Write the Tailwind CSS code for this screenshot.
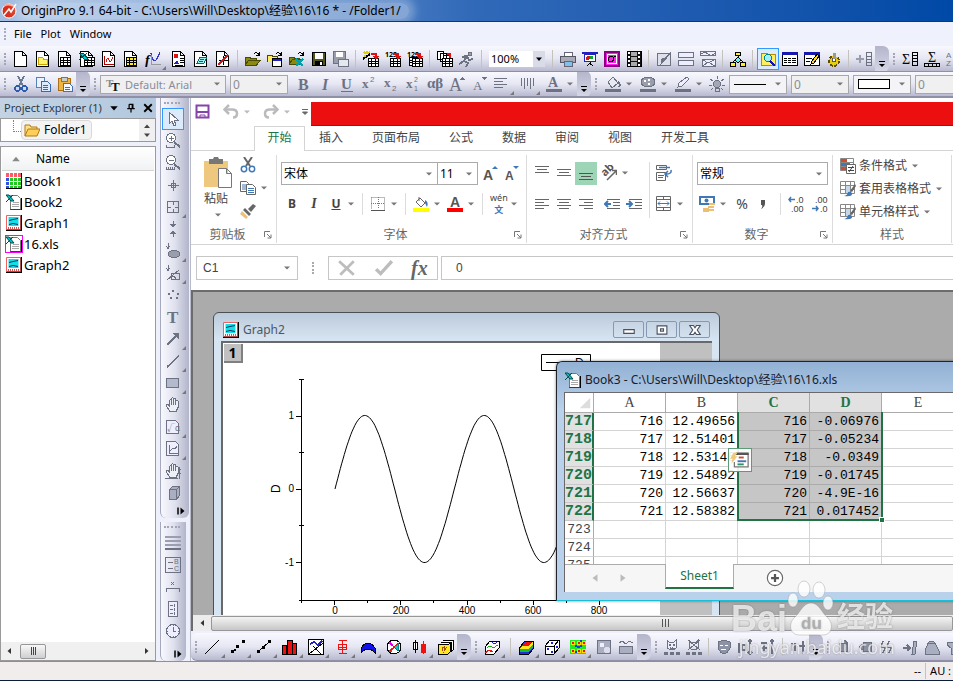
<!DOCTYPE html>
<html lang="zh-CN">
<head>
    <meta charset="UTF-8">
    <meta name="viewport" content="width=device-width, initial-scale=1.0">
    <title>OriginPro 9.1 64-bit</title>
    <script src="https://cdn.jsdelivr.net/npm/@tailwindcss/browser@4"></script>
</head>
<body class="flex h-screen flex-col overflow-hidden bg-[#eef0fb] font-['Noto_Sans','Noto_Sans_CJK_SC',sans-serif] text-xs text-black">

    <!-- Title bar -->
    <header class="flex h-[22px] shrink-0 items-center gap-1 overflow-hidden border-b border-[#1b3561] bg-linear-to-r from-[#a3bfe2] via-[#3069b8] to-[#0049a6] pl-px">
        <svg class="size-4 shrink-0" data-icon="origin"></svg>
        <h1 class="rounded-full bg-white/35 pr-2 text-xs whitespace-nowrap shadow-[0_0_8px_6px_rgba(255,255,255,0.3)]">OriginPro 9.1 64-bit - C:\Users\Will\Desktop\经验\16\16 * - /Folder1/</h1>
    </header>

    <!-- Menu -->
    <nav class="flex h-6 shrink-0 items-center bg-[#eff1fc] pl-1 text-[11px]">
        <span class="h-3 border-l-2 border-dotted border-[#a9abb9]"></span>
        <a href="#" class="ml-2">File</a>
        <a href="#" class="ml-[9px]">Plot</a>
        <a href="#" class="ml-[9px]">Window</a>
    </nav>

    <!-- Standard toolbar -->
    <div class="flex h-[26px] shrink-0 items-center overflow-hidden border-b border-[#8f90a6] bg-linear-to-b from-[#f8f8fe] via-[#e6e7f3] to-[#b9bad0] pt-px">
        <div class="flex items-center" data-tools="grip new folder sheet excel graph matrix fx* layout notes func | open openTpl openXls save saveTpl | wizard imp1 imp2 | batch run |"></div>
        <label class="relative mr-1 ml-[3px] flex h-4 w-14 shrink-0 bg-white">
            <select class="w-full appearance-none px-0.5 text-[11px] leading-4" aria-label="Zoom"><option>100%</option></select>
            <span class="pointer-events-none absolute inset-y-0 right-0 flex w-3 items-center justify-center bg-[#d9dbe9]"><svg class="size-2" data-icon="down"></svg></span>
        </label>
        <div class="flex items-center" data-tools="| print slides video film | brush split vsplit | tree | explorer! results command gear | addcol over grip sum sigma sort"></div>
    </div>

    <!-- Format toolbar -->
    <div class="flex h-[26px] shrink-0 items-center overflow-hidden border-b-2 border-[#8f90a6] bg-linear-to-b from-[#f8f8fe] via-[#e6e7f3] to-[#b9bad0] text-[#8a8c96]">
        <div class="flex items-center" data-tools="grip cut copy paste over grip"></div>
        <label class="relative flex h-[19px] w-[126px] shrink-0 items-center gap-1 border border-[#a8a8a8] bg-[#f0f0f3] pl-1">
            <svg class="size-4 shrink-0" data-icon="tt"></svg>
            <select class="w-24 appearance-none text-[11px] leading-[17px]" aria-label="Font"><option>Default: Arial</option></select>
            <svg class="pointer-events-none absolute right-1 size-2" data-icon="downGray"></svg>
        </label>
        <label class="relative ml-1 flex h-[19px] w-[58px] shrink-0 items-center border border-[#a8a8a8] bg-[#f0f0f0]">
            <select class="w-full appearance-none pl-0.5 text-xs leading-[17px]" aria-label="Font size"><option>0</option></select>
            <svg class="pointer-events-none absolute right-1 size-2" data-icon="downGray"></svg>
        </label>
        <div class="ml-1 flex items-center" data-tools="bold italic under sup sub supsub greek bigA smallA alignL* vlines* fontA+ over grip bucket+ palette+ pen+ bulb"></div>
        <label class="relative ml-px flex h-[19px] w-[58px] shrink-0 items-center border border-[#a8a8a8] bg-[#f4f4f8] px-1">
            <span class="w-8 border-b border-black"></span>
            <select class="absolute inset-0 appearance-none opacity-0" aria-label="Line style"><option>Solid</option></select>
            <svg class="pointer-events-none absolute right-1 size-2" data-icon="downGray"></svg>
        </label>
        <label class="relative ml-1 flex h-[19px] w-[58px] shrink-0 items-center border border-[#a8a8a8] bg-[#f0f0f0]">
            <select class="w-full appearance-none pl-0.5 text-xs leading-[17px]" aria-label="Line width"><option>0</option></select>
            <svg class="pointer-events-none absolute right-1 size-2" data-icon="downGray"></svg>
        </label>
        <label class="relative ml-1 flex h-[19px] w-[58px] shrink-0 items-center border border-[#a8a8a8] bg-[#f4f4f8] px-1">
            <span class="h-[10px] w-8 border border-black bg-white"></span>
            <select class="absolute inset-0 appearance-none opacity-0" aria-label="Fill pattern"><option>None</option></select>
            <svg class="pointer-events-none absolute right-1 size-2" data-icon="downGray"></svg>
        </label>
        <label class="relative ml-1 flex h-[19px] w-[58px] shrink-0 items-center border border-[#a8a8a8] bg-[#f0f0f0]">
            <select class="w-full appearance-none pl-0.5 text-xs leading-[17px]" aria-label="Pattern width"><option>0</option></select>
        </label>
    </div>

    <div class="flex min-h-0 flex-1">
        <!-- Project explorer -->
        <aside class="flex w-[156px] shrink-0 flex-col">
            <div class="flex h-5 shrink-0 items-center bg-linear-to-r from-[#c3d3e3] to-[#b3c8de] pl-1 text-[11px] text-[#2c3a4c]">
                <h2 class="flex-1 text-[11px] whitespace-nowrap">Project Explorer (1)</h2>
                <button class="flex w-4 justify-center" aria-label="Menu"><svg class="size-2.5" data-icon="down"></svg></button>
                <button class="flex w-[18px] justify-center" aria-label="Pin"><svg class="size-2.5" data-icon="pin"></svg></button>
                <button class="flex w-4 justify-center" aria-label="Close"><svg class="size-2.5" data-icon="x"></svg></button>
            </div>
            <div class="flex h-6 shrink-0 items-center border border-[#9a9a9a] bg-white">
                <span class="mb-2 ml-3 h-3 w-2 border-b border-l border-dotted border-[#808080]"></span>
                <a href="#" class="flex h-5 items-center gap-1 rounded-sm border border-[#d9d9d9] bg-[#f3f3f3] px-0.5 pr-1 text-xs"><svg class="size-4" data-icon="treeFolder"></svg>Folder1</a>
                <span class="ml-auto flex h-full w-4 flex-col items-center justify-around bg-[#f0f0f0] py-0.5"><svg class="size-2" data-icon="up"></svg><svg class="size-2" data-icon="downDark"></svg></span>
            </div>
            <div class="mt-1 flex min-h-0 flex-1 flex-col border border-[#9a9a9a] bg-white">
                <div class="mx-px flex h-6 shrink-0 items-center border-b border-[#d5d5d5] bg-linear-to-b from-white to-[#f1f2f4] pl-2 text-xs"><svg class="mr-3.5 size-3" data-icon="upGray"></svg>Name</div>
                <ul class="flex-1 pl-[5px] text-[13px] leading-[21px]">
                    <li><a href="#" class="flex h-[21px] items-center gap-0.5"><svg class="mb-px size-4" data-icon="book1"></svg>Book1</a></li>
                    <li><a href="#" class="flex h-[21px] items-center gap-0.5"><svg class="mb-px size-4" data-icon="xls"></svg>Book2</a></li>
                    <li><a href="#" class="flex h-[21px] items-center gap-0.5"><svg class="mb-px size-4" data-icon="graphFile"></svg>Graph1</a></li>
                    <li><a href="#" class="flex h-[21px] items-center gap-0.5"><svg class="mb-px size-4 outline outline-[#f0f]" data-icon="xls"></svg>16.xls</a></li>
                    <li><a href="#" class="flex h-[21px] items-center gap-0.5"><svg class="mb-px size-4" data-icon="graphFile"></svg>Graph2</a></li>
                </ul>
                <div class="flex h-[18px] shrink-0 items-center bg-[#f0f0f0] px-1">
                    <svg class="size-2" data-icon="left"></svg>
                    <span class="ml-[7px] flex h-[15px] w-[26px] items-center justify-center gap-px rounded-xs border border-[#979797] bg-linear-to-b from-[#f8f8f8] to-[#cfcfd2]"><i class="h-2 w-px bg-[#444]"></i><i class="h-2 w-px bg-[#444]"></i><i class="h-2 w-px bg-[#444]"></i></span>
                    <svg class="ml-auto size-2" data-icon="right"></svg>
                </div>
            </div>
        </aside>

        <!-- Tool palette -->
        <aside class="flex w-[34px] shrink-0 flex-col overflow-hidden pl-1">
            <div class="flex w-[29px] flex-col items-start rounded-b-md border-l border-[#a6a8bd] bg-linear-to-r from-[#f8f8fe] via-[#dfe1ee] to-[#b2b4ca] pl-px" data-palette="pointer! zoomIn zoomOut cross screen* reader mask* region* dots text arrow* line* rect* hand formula* minigraph* handaxis cube"></div>
            <div class="mt-1 flex w-[26px] flex-1 flex-col items-start rounded-b-md border-l border-[#a6a8bd] bg-linear-to-r from-[#f8f8fe] via-[#dfe1ee] to-[#b2b4ca] pl-px" data-palette="bars legend scale colorbar clock"></div>
        </aside>

        <main class="flex min-w-0 flex-1 flex-col border-l border-[#b9bbc9]">
            <!-- Quick access -->
            <div class="flex h-7 shrink-0 items-center bg-white text-[#444]">
                <button class="ml-1 flex w-4 justify-center" aria-label="保存"><svg class="size-4" data-icon="xlSave"></svg></button>
                <button class="ml-3 flex items-center gap-1" aria-label="撤消"><svg class="size-4" data-icon="undo"></svg><svg class="size-2 opacity-50" data-icon="downGray"></svg></button>
                <button class="ml-3 flex items-center gap-1" aria-label="恢复"><svg class="size-4" data-icon="redo"></svg><svg class="size-2 opacity-50" data-icon="downGray"></svg></button>
                <button class="ml-2.5 w-2" aria-label="自定义"><svg class="size-2" data-icon="more"></svg></button>
                <div class="mt-1 ml-0.5 h-6 flex-1 border-b border-[#c00] bg-[#eb0f0f]"></div>
            </div>

            <!-- Ribbon tabs -->
            <nav class="flex h-[25px] shrink-0 items-stretch bg-white text-xs leading-6 text-[#444]">
                <span class="w-[63px] border-b border-[#d4d4d4]"></span>
                <a href="#" class="w-[51px] border border-b-0 border-[#d4d4d4] text-center leading-[22px] text-[#217346]">开始</a>
                <div class="flex flex-1 gap-[29px] border-b border-[#d4d4d4] pl-[14px] whitespace-nowrap">
                    <a href="#">插入</a><a href="#">页面布局</a><a href="#">公式</a><a href="#">数据</a><a href="#">审阅</a><a href="#">视图</a><a href="#">开发工具</a>
                </div>
            </nav>

            <!-- Ribbon -->
            <div class="flex h-[94px] shrink-0 overflow-hidden border-b border-[#d4d4d4] bg-white pt-1 pb-px text-xs text-[#444]">
                <section class="flex w-[86px] shrink-0 flex-col border-r border-[#dcdcdc]">
                    <div class="flex flex-1 gap-2 pt-0.5 pl-[13px]">
                        <button class="flex w-7 flex-col items-start text-xs leading-4"><svg class="h-8 w-7" viewBox="0 0 28 32"><path d="M0 4h24v26H0z" fill="#edc87e"/><path d="M5 7V2h4l1-2h4l1 2h4v5z" fill="#777"/><path d="M14.500 11.500h8l5 5v14h-13z M22.500 11.500v5h5" fill="#fff" stroke="#777"/></svg><span class="mt-0.5">粘贴</span><svg class="mt-1 ml-2.5 size-2" data-icon="downGray"></svg></button>
                        <div class="flex flex-col gap-[7px]">
                            <button class="w-4" aria-label="剪切"><svg class="size-4" data-icon="xlCut"></svg></button>
                            <button class="flex items-center gap-1" aria-label="复制"><svg class="size-4" data-icon="xlCopy"></svg><svg class="size-2" data-icon="downGray"></svg></button>
                            <button class="w-4" aria-label="格式刷"><svg class="size-4" data-icon="xlBrush"></svg></button>
                        </div>
                    </div>
                    <div class="flex h-4 items-center text-[#666]"><h3 class="flex-1 text-center">剪贴板</h3><svg class="mr-1 size-2" data-icon="launch"></svg></div>
                </section>

                <section class="flex w-[250px] shrink-0 flex-col border-r border-[#dcdcdc]">
                    <div class="flex flex-1 flex-col gap-2 px-1 pt-[7px]">
                        <div class="flex h-[23px] items-center">
                            <label class="relative flex h-[23px] w-[157px] shrink-0 items-center border border-[#ababab] text-black"><select class="w-full appearance-none pl-0.5" aria-label="字体"><option>宋体</option></select><svg class="pointer-events-none absolute right-1 size-2" data-icon="downGray"></svg></label>
                            <label class="relative -ml-px flex h-[23px] w-[41px] shrink-0 items-center border border-[#ababab] text-black"><select class="w-full appearance-none pl-0.5" aria-label="字号"><option>11</option></select><svg class="pointer-events-none absolute right-1 size-2" data-icon="downGray"></svg></label>
                            <button class="ml-px flex h-[23px] w-[22px] items-center justify-center pb-px" aria-label="增大字号"><svg class="size-4" data-icon="growA"></svg></button>
                            <button class="flex h-[23px] w-[22px] items-center justify-center pb-px" aria-label="减小字号"><svg class="size-4" data-icon="shrinkA"></svg></button>
                        </div>
                        <div class="flex h-[22px] items-center">
                            <button class="w-[22px] shrink-0 text-xs font-bold">B</button>
                            <button class="w-[22px] shrink-0 font-['Liberation_Serif',serif] text-sm font-bold italic">I</button>
                            <button class="w-[22px] shrink-0 text-xs font-bold underline">U</button>
                            <svg class="size-2 shrink-0" data-icon="downGray"></svg>
                            <span class="mx-[7px] h-full border-l border-[#dcdcdc]"></span>
                            <button class="flex items-center gap-1" aria-label="边框"><svg class="size-4" data-icon="xlBorder"></svg><svg class="size-2" data-icon="downGray"></svg></button>
                            <span class="mx-[7px] h-full border-l border-[#dcdcdc]"></span>
                            <button class="flex items-center gap-1" aria-label="填充颜色"><svg class="size-4" data-icon="xlFill"></svg><svg class="size-2" data-icon="downGray"></svg></button>
                            <button class="ml-1.5 flex items-center gap-1" aria-label="字体颜色"><svg class="size-4" data-icon="xlFontA"></svg><svg class="size-2" data-icon="downGray"></svg></button>
                            <span class="mx-[7px] h-full border-l border-[#dcdcdc]"></span>
                            <button class="flex items-center gap-0.5" aria-label="拼音"><span class="flex flex-col items-center text-[9px] leading-3"><span>wén</span><span class="font-bold text-[#3b76b8]">文</span></span><svg class="size-2" data-icon="downGray"></svg></button>
                        </div>
                    </div>
                    <div class="flex h-4 items-center text-[#666]"><h3 class="flex-1 text-center">字体</h3><svg class="mr-1 size-2" data-icon="launch"></svg></div>
                </section>

                <section class="flex w-[166px] shrink-0 flex-col border-r border-[#dcdcdc]">
                    <div class="flex flex-1 gap-1 pt-[7px] pl-1">
                        <div class="flex flex-col gap-2">
                            <div class="flex h-[23px] items-center">
                                <button class="flex h-[23px] w-[22px] items-center justify-center pb-px" aria-label="顶端对齐"><svg class="size-4" data-icon="vTop"></svg></button>
                                <button class="flex h-[23px] w-[22px] items-center justify-center pb-px" aria-label="垂直居中"><svg class="size-4" data-icon="vMid"></svg></button>
                                <button class="flex h-[23px] w-[22px] items-center justify-center bg-[#9fd5b7] pb-px" aria-label="底端对齐"><svg class="size-4" data-icon="vBot"></svg></button>
                                <button class="ml-1 flex h-[23px] items-center gap-1 pb-px" aria-label="方向"><svg class="size-4" data-icon="orient"></svg><svg class="size-2" data-icon="downGray"></svg></button>
                            </div>
                            <div class="flex h-[22px] items-center">
                                <button class="flex w-[22px] justify-center" aria-label="左对齐"><svg class="size-4" data-icon="hLeft"></svg></button>
                                <button class="flex w-[22px] justify-center" aria-label="居中"><svg class="size-4" data-icon="hMid"></svg></button>
                                <button class="flex w-[22px] justify-center" aria-label="右对齐"><svg class="size-4" data-icon="hRight"></svg></button>
                                <button class="ml-1 flex w-[22px] justify-center" aria-label="减少缩进"><svg class="size-4" data-icon="outdent"></svg></button>
                                <button class="flex w-[22px] justify-center" aria-label="增加缩进"><svg class="size-4" data-icon="indent"></svg></button>
                            </div>
                        </div>
                        <span class="h-14 border-l border-[#dcdcdc]"></span>
                        <div class="ml-0.5 flex flex-col gap-2">
                            <button class="flex h-[23px] items-center pb-px" aria-label="自动换行"><svg class="size-4" data-icon="wrap"></svg></button>
                            <button class="flex h-[22px] items-center gap-1" aria-label="合并后居中"><svg class="size-4" data-icon="merge"></svg><svg class="size-2" data-icon="downGray"></svg></button>
                        </div>
                    </div>
                    <div class="flex h-4 items-center text-[#666]"><h3 class="flex-1 text-center">对齐方式</h3><svg class="mr-1 size-2" data-icon="launch"></svg></div>
                </section>

                <section class="flex w-[140px] shrink-0 flex-col border-r border-[#dcdcdc]">
                    <div class="flex flex-1 flex-col gap-2 px-1 pt-[7px]">
                        <label class="relative flex h-[23px] w-[131px] items-center border border-[#ababab] text-black"><select class="w-full appearance-none pl-0.5" aria-label="数字格式"><option>常规</option></select><svg class="pointer-events-none absolute right-1 size-2" data-icon="downGray"></svg></label>
                        <div class="flex h-[22px] items-center">
                            <button class="ml-0.5 flex items-center gap-1" aria-label="会计数字格式"><svg class="size-4" data-icon="money"></svg><svg class="size-2" data-icon="downGray"></svg></button>
                            <button class="ml-1 w-[22px] text-sm">%</button>
                            <button class="flex w-5 justify-center" aria-label="千位分隔"><svg class="size-4" data-icon="comma"></svg></button>
                            <span class="mx-[7px] h-full border-l border-[#dcdcdc]"></span>
                            <button class="w-4" aria-label="增加小数位数"><svg class="size-4 overflow-visible" data-icon="decInc"></svg></button>
                            <button class="ml-2 w-4" aria-label="减少小数位数"><svg class="size-4 overflow-visible" data-icon="decDec"></svg></button>
                        </div>
                    </div>
                    <div class="flex h-4 items-center text-[#666]"><h3 class="flex-1 text-center">数字</h3><svg class="mr-1 size-2" data-icon="launch"></svg></div>
                </section>

                <section class="flex w-[119px] shrink-0 flex-col border-r border-[#dcdcdc]">
                    <div class="flex flex-1 flex-col pl-[7px] whitespace-nowrap">
                        <button class="flex h-[23px] items-center gap-[3px] pb-px"><svg class="size-4" data-icon="cond"></svg>条件格式<svg class="ml-px size-2" data-icon="downGray"></svg></button>
                        <button class="flex h-[23px] items-center gap-[3px] pb-px"><svg class="size-4" data-icon="tblStyle"></svg>套用表格格式<svg class="ml-px size-2" data-icon="downGray"></svg></button>
                        <button class="flex h-[23px] items-center gap-[3px] pb-px"><svg class="size-4" data-icon="tblStyle"></svg>单元格样式<svg class="ml-px size-2" data-icon="downGray"></svg></button>
                    </div>
                    <h3 class="h-4 text-center leading-4 text-[#666]">样式</h3>
                </section>
            </div>

            <!-- Formula bar -->
            <div class="flex h-[45px] shrink-0 items-center bg-white pl-[5px] font-['Liberation_Sans','Noto_Sans_CJK_SC',sans-serif] text-xs text-[#444]">
                <label class="relative flex h-6 w-[102px] items-center border border-[#c6c6c6]"><input class="w-full px-1.5" value="C1" aria-label="名称框"><svg class="absolute right-1.5 size-2" data-icon="downGray"></svg></label>
                <span class="mx-[14px] h-3 border-l-2 border-dotted border-[#aaa]"></span>
                <div class="flex h-6 w-[110px] items-center justify-around border border-[#c6c6c6]">
                    <button aria-label="取消"><svg class="size-[18px]" data-icon="fxX"></svg></button>
                    <button aria-label="输入"><svg class="size-[18px]" data-icon="fxOk"></svg></button>
                    <button class="font-['Liberation_Serif',serif] text-xl leading-5 font-bold text-[#666] italic">fx</button>
                </div>
                <input class="ml-[3px] h-6 min-w-0 flex-1 border border-r-0 border-[#c6c6c6] px-3.5 text-xs" value="0" aria-label="编辑栏">
            </div>

            <!-- Desktop -->
            <div class="relative min-h-0 flex-1 overflow-hidden border-t-2 border-l-2 border-[#6c6c6c] bg-[#ababab]">
                <section class="absolute top-[20px] left-[20px] flex h-[340px] w-[507px] flex-col rounded-t-md border border-[#4c4f54] bg-linear-to-b from-[#bccbdb] to-[#d7e4f2] to-8% px-[7px] pt-px">
                    <div class="flex h-[27px] shrink-0 items-center pt-1 text-[#4b5866]">
                        <svg class="mr-1 ml-0.5 size-4" data-icon="graphFile"></svg>
                        <h2 class="flex-1 text-xs">Graph2</h2>
                        <div class="mr-0.5 flex gap-0.5">
                            <button class="flex h-[17px] w-[31px] items-center justify-center rounded-xs border border-[#8699b4]" aria-label="Minimize"><svg class="size-3" data-icon="winMin"></svg></button>
                            <button class="flex h-[17px] w-[31px] items-center justify-center rounded-xs border border-[#8699b4]" aria-label="Restore"><svg class="size-3" data-icon="winMax"></svg></button>
                            <button class="flex h-[17px] w-[31px] items-center justify-center rounded-xs border border-[#8699b4]" aria-label="Close window"><svg class="size-3" data-icon="winClose"></svg></button>
                        </div>
                    </div>
                    <div class="relative flex flex-1 border-t-2 border-l-2 border-[#69696b] bg-[#c0c0c0]">
                        <button class="absolute top-px left-px size-[19px] border-r-2 border-b-2 border-[#808080] bg-[#c0c0c0] text-sm leading-4 font-bold">1</button>
                        <svg class="h-[308px] w-[437px] bg-white font-['Liberation_Sans',sans-serif]" viewBox="223 343 437 308" font-size="10">
                            <g id="axes" stroke="#000" fill="none" shape-rendering="crispEdges"></g>
                            <path id="curve" stroke="#000" fill="none"/>
                            <g text-anchor="end"><text x="294" y="419">1</text><text x="294" y="492">0</text><text x="294" y="566">-1</text></g>
                            <g text-anchor="middle"><text x="335" y="614">0</text><text x="401" y="614">200</text><text x="467" y="614">400</text><text x="533" y="614">600</text><text x="599" y="614">800</text></g>
                            <text transform="translate(280 493) rotate(-90)" font-size="12">D</text>
                            <path d="M541.500 354.500h49v16h-49zM546 362.500h26" stroke="#000" fill="none"/>
                            <text x="575" y="367" font-size="12">D</text>
                        </svg>
                    </div>
                </section>

                <section class="absolute top-[69px] left-[363px] flex h-60 w-[480px] flex-col rounded-tl-md border border-[#20242a] border-b-[#17c0d8] bg-linear-to-b from-[#92b1d4] to-[#b9d1ea] to-20% px-[7px] pb-2 shadow-[0_0_3px_rgba(0,0,0,0.5)]">
                    <div class="flex h-[30px] shrink-0 items-center gap-1 pt-[5px] pl-px text-[#16202c]">
                        <svg class="size-4" data-icon="xls"></svg>
                        <h2 class="text-xs whitespace-nowrap">Book3 - C:\Users\Will\Desktop\经验\16\16.xls</h2>
                    </div>
                    <div class="relative flex min-h-0 flex-1 flex-col border-t border-l border-[#69696b] bg-white">
                        <div class="min-h-0 flex-1 overflow-hidden">
                            <table class="w-[461px] table-fixed border-separate border-spacing-0 font-['Liberation_Mono',monospace] text-[13px] leading-[17px]">
                                <thead>
                                    <tr class="h-5 font-['Liberation_Serif',serif] text-sm leading-[19px] text-[#444]">
                                        <th class="w-[29px] border-r border-b border-[#ababab]"><svg class="ml-3.5 size-3" data-icon="corner"></svg></th>
                                        <th class="w-[72px] border-r border-b border-[#ababab] font-normal">A</th>
                                        <th class="w-[72px] border-r border-b border-[#ababab] font-normal">B</th>
                                        <th class="w-[72px] border-r border-b border-[#ababab] bg-[#e1e1e1] font-bold text-[#217346]">C</th>
                                        <th class="w-[72px] border-r border-b border-[#ababab] bg-[#e1e1e1] font-bold text-[#217346]">D</th>
                                        <th class="w-[72px] border-b border-[#ababab] font-normal">E</th>
                                        <th class="w-[72px] border-b border-[#ababab]"></th>
                                    </tr>
                                </thead>
                                <tbody id="cells"></tbody>
                            </table>
                        </div>
                        <!-- Selection frame -->
                        <div class="pointer-events-none absolute top-[19px] left-[172px] h-[109px] w-[146px] border-2 border-t-0 border-[#217346]"></div>
                        <div class="absolute top-[124px] left-[314px] size-[6px] border border-white bg-[#217346]"></div>
                        <button class="absolute top-[55px] left-[163px] flex size-6 items-center justify-center border border-[#5d9b78] bg-white/90" aria-label="快速分析"><svg class="size-5" data-icon="quick"></svg></button>
                        <div class="flex h-7 shrink-0 items-start border-t border-[#ababab] bg-[#f6f6f6]">
                            <button class="mt-2 ml-6 flex w-3 justify-center" aria-label="上一张"><svg class="size-2.5" data-icon="leftPale"></svg></button>
                            <button class="mt-2 ml-4 flex w-3 justify-center" aria-label="下一张"><svg class="size-2.5" data-icon="rightPale"></svg></button>
                            <button class="-mt-px ml-9 h-[25px] w-[69px] border-r border-b-2 border-l border-[#ababab] border-b-[#217346] bg-white text-xs text-[#217346]">Sheet1</button>
                            <button class="mt-1 ml-8 w-[18px]" aria-label="新工作表"><svg class="size-[18px]" data-icon="plusCircle"></svg></button>
                        </div>
                    </div>
                </section>
            </div>

            <!-- Horizontal scrollbar -->
            <div class="flex h-4 shrink-0 items-center border-l-2 border-[#6c6c6c] bg-[#ececec]">
                <svg class="mx-[5px] size-2 shrink-0" data-icon="left"></svg>
                <div class="flex h-[15px] flex-1 items-center justify-center gap-0.5 rounded-xs border border-[#979797] bg-linear-to-b from-[#f4f4f4] to-[#c6c6c8] pr-[150px] pl-[316px]"><i class="h-2 w-px bg-[#555]"></i><i class="h-2 w-px bg-[#555]"></i><i class="h-2 w-px bg-[#555]"></i></div>
            </div>

            <!-- 2D graph toolbar -->
            <div class="mt-0.5 flex h-7 shrink-0 items-center overflow-hidden rounded-l-md border-b border-[#8f90a6] bg-linear-to-b from-[#f8f8fe] via-[#e6e7f3] to-[#b9bad0] pt-px">
                <div class="flex items-center" data-tools="grip pLine* pScatter* pBoth* pColumn* pMulti* pBox* pArea* pPolar* pCandle* pTemplate over grip p3d* | pSurf* pScat3* pContour* pImage pProfile over grip catA catB | catC tickA tickB | tickC over grip moveA moveB moveC moveD trap funnel"></div>
            </div>
        </main>
    </div>

    <!-- Status bar -->
    <footer class="flex h-5 shrink-0 items-center justify-end border-t border-b border-t-[#8e8f94] border-b-[#0d1c38] bg-[#f1edec] pr-0.5 text-[11px]">
        <span class="border-r border-[#c5c1c0] px-1 leading-4">--</span><span class="pl-1">AU :</span>
    </footer>

    <!-- Watermark -->
    <div class="pointer-events-none fixed right-[50px] bottom-[23px] flex w-[172px] flex-col text-white/75 [text-shadow:0_0_2px_rgba(90,90,90,0.6)]">
        <div class="flex h-[58px] items-end font-['Liberation_Sans','Noto_Sans_CJK_SC',sans-serif]">
            <span class="text-[36px] leading-[34px] font-bold">Bai</span>
            <svg class="h-14 w-12" viewBox="0 0 48 56"><g fill="#fff" fill-opacity=".8" stroke="#888" stroke-opacity=".35"><ellipse cx="6" cy="20" rx="5" ry="7"/><ellipse cx="17" cy="9" rx="6" ry="8"/><ellipse cx="32" cy="10" rx="6" ry="8"/><ellipse cx="41" cy="23" rx="5" ry="7"/><path d="M24 23c8 0 10 9 17 15 6 6 4 17-5 17-6 0-18 0-24 0-9 0-11-11-5-17 7-6 9-15 17-15z"/></g><text x="14" y="49" font-size="17" font-weight="bold" fill="#aaa" fill-opacity=".8">du</text></svg>
            <span class="ml-0.5 text-[28px] leading-[36px] font-bold">经验</span>
        </div>
        <span class="text-center text-lg leading-[22px] whitespace-nowrap">jingyan.baidu.com</span>
    </div>

    <script>
        const G = '#6d7282';
        const p = (d, s = '#000', f = 'none', w = 1) => `<path d="${d}" stroke="${s}" fill="${f}" stroke-width="${w}"/>`;
        const t = (str, x, y, size, fill = G, more = '') => `<text x="${x}" y="${y}" font-size="${size}" fill="${fill}" ${more}>${str}</text>`;
        const serif = 'font-family="Liberation Serif" font-weight="bold"';
        const sans = 'font-family="Liberation Sans"';
        const page = p('M1.500 .5h8l4 4v11h-12zM9.500 .5v4h4', '#000', '#fff');
        const grid = (x, y, c = '#fff') => p(`M${x}.5 ${y}.5h10v8h-10zM${x}.5 ${y + 3}.500h10M${x}.5 ${y + 5}.500h10M${x + 3}.500 ${y}.5v8M${x + 7}.500 ${y}.5v8`, '#000', c);
        const xmark = p('M0 2h4l5 6h-4zM8 2l-8 7', '#004a4a', '#00c8d0');
        const redArrow = p('M8 3h5v4M11 5l2 2.500 2-2.500', '#e01010', 'none', 1.5);
        const hand = p('M5 14.500L1.500 9q-.5-2 1.500-1.500l1.500 2V3.500q1-1.500 2 0v4-6q1-1.500 2 0v6-5.500q1-1.500 2 0v6-4q1.500-1.500 2.500 0v6.500l-2 4z', G, '#eef0f8');

        const icons = {
            origin: '<circle cx="8" cy="8" r="7" fill="#d8301c" stroke="#fff"/>' + p('M3 12l5-6 2 3 5-8', '#fff', 'none', 1.5) + p('M3 3q4-3 9 0', '#f6b0a0', 'none', 2),
            down: p('M2 5h12l-6 7z', 'none', '#000'), downDark: p('M2 5h12l-6 7z', 'none', '#444'), up: p('M2 12h12l-6-7z', 'none', '#444'),
            downGray: p('M2 5h12l-6 6z', 'none', '#777'), upGray: p('M3 11h10l-5-6z', 'none', '#888'),
            left: p('M12 2v12l-7-6z', 'none', '#333'), right: p('M4 2v12l7-6z', 'none', '#333'),
            leftPale: p('M12 2v12l-8-6z', 'none', '#bbb'), rightPale: p('M4 2v12l8-6z', 'none', '#bbb'),
            more: p('M2 3h12M3 8h10l-5 5z', '#666', '#666', 2),
            pin: p('M5 2h6v7M5 2v7M2 9h12M8 9v6M10 2v7', '#000', 'none', 2), x: p('M2 2l12 12M14 2l-12 12', '#000', 'none', 3),
            launch: p('M1 12V1h11M6 6l8 8M14 7v7H7', '#777', 'none', 2), corner: p('M15 1v14H1z', 'none', '#ddd'),
            // standard toolbar
            new: page, folder: page + p('M3.500 13.500v-7h4l1 1.500h4v5.500z', '#c9a400', '#fff36b'),
            sheet: page + grid(3, 6), excel: page + grid(5, 6) + xmark,
            graph: page + p('M3.500 5v8h9', '#a00') + p('M5 11q2-7 3-2t4-3', '#e01010'),
            matrix: page + grid(3, 6, '#ffee20'),
            fx: p('M6 2q3 16 9-1', '#3838c8', 'none', 1.300) + p('M6.500 4v9h9', '#999') + t('f', 0, 14, 14, '#000', serif + ' font-style="italic"'),
            layout: page + p('M3 3h4v4H3z', 'none', '#e01010') + p('M3 13l3-4 2 4z', 'none', '#2020d0') + p('M9 7.500h4M9 9.500h4M9 11.500h4M4 14h8'),
            notes: page + p('M4 12l3-6h7l-3 6zM6 10h4M7 8h4', '#006a6a', '#9ff0f0'),
            func: page + p('M4 9.500h9M8.500 5v9', '#000') + p('M3 14l10-10', '#e01010', 'none', 1.500),
            open: p('M.5 14V6h4l1 1h6v2M.5 14l3-5h12l-4 5z', '#4a4a00', '#8a8a10') + p('M9 3q3-3 5 1M14 1v3h-3'),
            openTpl: p('M.5 11V4h4l1 1h5v3', '#4a4a00', '#ffec60') + p('M5.500 7.500h9v8h-9z', '#000', '#fff') + p('M6 8.500h8', '#2020d0', 'none', 2) + p('M9 3q3-3 5 1M14 1v3h-3'),
            openXls: p('M.5 13V6h4l1 1h5v2M.5 13l3-5h9l-2 5z', '#4a4a00', '#8a8a10') + p('M7 8l7 7M14 8l-7 7', '#00a0a8', 'none', 2.500) + p('M9 3q3-3 5 1M14 1v3h-3'),
            save: p('M1.500 1.500h13v13h-13z', '#000', '#55551a') + p('M4 2h8v6H4z', 'none', '#fff') + p('M4 10h8v4H4z', 'none', '#000') + p('M9 11h2v3H9z', 'none', '#fff'),
            saveTpl: p('M.5 .5h12v12H.5z', G, '#9a9eac') + p('M3 1h7v5H3z', 'none', '#fff') + p('M5.500 8.500h10v7h-10z', G, '#e6e8f0'),
            wizard: grid(5, 7) + p('M0 8l7-5', '#000', 'none', 2) + p('M4 0v3M1 1l2 2M7 1L5 2M1 5h2', '#e0d000', 'none', 1.500) + redArrow,
            imp1: grid(5, 7) + t('123', 0, 6, 7, '#000', 'font-weight="bold"') + redArrow, imp2: grid(2, 6) + grid(5, 7) + t('123', 0, 6, 7, '#000', 'font-weight="bold"') + redArrow,
            batch: p('M.5 .5h6v8h-6zM3.500 2.500h6v8h-6zM6.500 4.500h6v9h-6z', '#000', '#fff') + grid(5, 7) + p('M10 3h3v4', '#e01010', 'none', 2),
            run: '<circle cx="11" cy="3" r="2" fill="#9a9eac" stroke="#6d7282"/>' + p('M3 6l5-1-3 5 4 2-2 4M8 5l2 4 4-1M5 10l-5 3', G, 'none', 2),
            print: p('M4 1h8v5H4z', '#667', '#fff') + p('M.5 6.500q0-1 1-1h13q1 0 1 1v5H.5z', '#556', '#a8acb8') + p('M4 10h8v5H4z', '#667', '#7ec0ee'),
            slides: p('M0 1.500h16', '#2020c0', 'none', 2) + p('M2.500 3.500h11v7h-11z', '#2020c0', '#fff') + '<circle cx="6" cy="7" r="2" fill="#e01010"/>' + p('M8 5h3v3H8z', 'none', '#10a030') + p('M8 11v3M5 15l3-3 3 3', '#000'),
            video: p('M1 1h14v14H1z', '#8a0080', '#ff20f0', 2) + p('M3.500 3.500h9v9h-9z', '#fff') + '<circle cx="7" cy="8" r="2.500" stroke="#000" fill="#ff20f0"/>' + p('M10 5.500h2', '#000'),
            film: p('M1 .5h14v15H1z', '#000', '#111') + p('M5 1h6v4H5zM5 6h6v4H5zM5 11h6v4H5z', 'none', '#aaa') + p('M3 1v14M13 1v14', '#fff', 'none', 1.500).replace('<path', '<path stroke-dasharray="2 2"'),
            brush: p('M1.500 2.500h13v12h-13z', G, '#dde0ea') + p('M15 1l-6 8-4 4 1-5 3-1z', G, G), split: p('M.5 1.500h15v5H.5zM.5 9.500h15v5H.5z', G, '#eef'),
            vsplit: p('M.5 .5h15v4H.5zM2.500 8.500h13v7h-13z', G, '#eef') + p('M1 3q4-3 7 0t7-1M3 9l5 3 6-3M3 15l5-4 7 4', G),
            tree: p('M8 5v4M3 11l5-4 5 4', '#000') + p('M5.500 1.500h5v3h-5zM.5 11.500h5v4h-5zM10.500 11.500h5v4h-5z', '#000', '#ffee20') + p('M8 6l3 3-3 3-3-3z', '#000', '#6ef0f0'),
            explorer: p('M1 2h6l1 1h7v11H1z', '#b09000', '#ffee60') + '<circle cx="8" cy="7" r="3.500" fill="#9ff0f8" stroke="#088"/>' + p('M10 10l5 5', '#1010b0', 'none', 2.500),
            results: p('M.5 1.500h15v13H.5z', '#000', '#fff') + p('M0 2.500h16', '#1818b0', 'none', 3) + p('M2 7.500h3M6 7.500h3M10 7.500h4M2 9.500h3M6 9.500h3M10 9.500h4M2 11.500h3M6 11.500h3M10 11.500h4'),
            command: p('M.5 1.500h15v13H.5z', '#000', '#fff') + p('M0 2.500h16', '#1818b0', 'none', 3) + p('M2 7.500h6M2 10.500h4', '#000') + p('M7 13l1-3 5-7 2 2-5 7z', '#000', '#ffd820'),
            gear: '<circle cx="8" cy="10" r="5" fill="#e8cc10" stroke="#5a4c00" stroke-dasharray="3 1.500" stroke-width="2"/><circle cx="8" cy="9" r="2" fill="#fff" stroke="#555"/>' + p('M8 2v6', '#999', 'none', 3),
            addcol: p('M0 8h8M4 4v8', '#9a9eac', 'none', 2) + p('M10.500 1.500h5v13h-5zM10 5.500h5M10 8.500h5M10 11.500h5', G),
            sum: t('Σ', 0, 13, 14, '#000', 'font-family="Liberation Serif"') + p('M10.500 1.500h5v13h-5zM10 4.500h5M10 7.500h5M10 10.500h5'), sigma: t('Σ', 4, 11, 14, '#000', 'font-family="Liberation Serif"') + p('M.5 12.500h15v3H.5zM4.500 12v3M8.500 12v3M12.500 12v3'),
            sort: t('A', 0, 7, 8, G, sans) + t('Z', 0, 15, 8, G, sans) + p('M11 1v13M8 11l3 3 3-3', G, 'none', 2),
            // format toolbar
            cut: p('M5 0l5 10M11 0L6 10', '#6a7890', 'none', 1.500) + '<circle cx="4.500" cy="12.500" r="2.500" fill="none" stroke="#2c5cb0" stroke-width="1.500"/><circle cx="11.500" cy="12.500" r="2.500" fill="none" stroke="#2c5cb0" stroke-width="1.500"/>',
            copy: p('M1.500 1.500h8v10h-8z', '#5a80b8', '#eaf2ff') + p('M6.500 5.500h6l3 3v7h-9zM8 9h5M8 11h5M8 13h5', '#3a68b0', '#dcebff'),
            paste: p('M1 2.500h12v12H1z', '#a87018', '#eeb63c') + p('M4 1h6v4H4z', '#777', '#ccc') + p('M6.500 7.500h6l3 3v5h-9zM8 11h5M8 13h5', '#4a70a8', '#f4f8ff'),
            tt: t('T', 1, 11, 11, '#888', serif) + t('T', 6, 15, 13, '#111', serif),
            bold: t('B', 3, 14, 16, G, serif), italic: t('I', 5, 14, 16, G, serif + ' font-style="italic"'), under: t('U', 2, 13, 15, G, serif) + p('M2 15h12', G),
            sup: t('x', 1, 12, 13, G, serif) + t('2', 9, 6, 8, G, sans), sub: t('x', 1, 11, 13, G, serif) + t('2', 9, 15, 8, G, sans), supsub: t('x', 1, 12, 13, G, serif) + t('2', 9, 6, 7, G, sans) + t('1', 9, 15, 7, G, sans),
            greek: t('αβ', 0, 12, 15, G, serif), bigA: t('A', 0, 15, 18, G, 'font-family="Liberation Serif"') + p('M11 4l2.500-3L16 4z', 'none', G), smallA: t('A', 2, 14, 13, G, 'font-family="Liberation Serif"') + p('M10 1h6l-3 3z', 'none', G),
            alignL: p('M1 2.500h13M1 5.500h9M1 8.500h13M1 11.500h9', G), vlines: p('M2.500 2v8M5.500 2v11M8.500 2v8M11.500 2v11M14.500 2v8', G),
            fontA: t('A', 2, 11, 14, G, serif) + p('M0 14h16', G, 'none', 3),
            bucket: p('M3 6l5-5 5 6-6 5z', G, '#e8eaf2') + p('M13 6q3 2 1 5', G, 'none', 2) + p('M0 14.500h16', G, 'none', 3),
            palette: '<ellipse cx="8" cy="6" rx="7" ry="5" fill="#9a9eac" stroke="#6d7282"/><circle cx="5" cy="5" r="1.500" fill="#fff"/><circle cx="9" cy="4" r="1.500" fill="#fff"/><circle cx="9" cy="8" r="1.500" fill="#fff"/>' + p('M0 14.500h16', G, 'none', 3),
            pen: p('M3 11l1-4 8-6 2 2-7 7z', G, '#eef') + p('M0 14.500h16', G, 'none', 3),
            bulb: '<circle cx="8" cy="8" r="3.500" fill="#a4a8b6" stroke="#6d7282"/>' + p('M6 12h4v3H6zM8 0v3M1 3l3 2M15 3l-3 2M0 9h3M13 9h3M2 14l2-2M14 14l-2-2', G),
            // project explorer
            treeFolder: p('M1 14V3h5l1 2h6v3', '#b07a10', '#ffe08a') + p('M1 14l3-7h12l-3 7z', '#b07a10', '#ffcf58'),
            book1: p('M0 0h15v15H0z', 'none', '#20c820') + p('M0 5h4v10H0z', 'none', '#3050e0') + p('M0 0h15v4H0z', 'none', '#ff5a6a') + p('M0 4.500h15M0 8.500h15M0 12.500h15M3.500 0v15M7.500 0v15M11.500 0v15', '#fff') + p('M15.500 0v15.500H0', '#000'),
            xls: p('M4.500 1.500h7l3 3v11h-10z', '#777', '#fff') + p('M15.500 4v12H4') + p('M7 8.500h6M6 10.500h7M6 12.500h7', '#aaa') + p('M0 1h3l5 6H5zM7 1L0 8', '#004a4a', '#00c8d0'),
            graphFile: p('M.5 .5h14v14H.5z', '#f06060', '#fff') + p('M2.500 2h10v9h-10z', 'none', '#10e0e8') + p('M3 5.500l4-1 5-1M3 9.500l4-1 5 1', '#103060') + p('M2 13h11', '#e05050', 'none', 2).replace('<path', '<path stroke-dasharray="1 1"') + p('M15.500 0v15.500H0', '#000', 'none', 1.500),
            // tools
            pointer: p('M4 1v12l3-3 2 5 2-1-2-5h4z', G, '#fff'),
            zoomIn: '<circle cx="6" cy="5" r="4.500" fill="#fff" stroke="#6d7282"/>' + p('M3.500 5h5M6 2.500v5', G) + p('M9 9l6 5', G, 'none', 2) + p('M1 12v2.500h8V12', G),
            zoomOut: '<circle cx="6" cy="5" r="4.500" fill="#fff" stroke="#6d7282"/>' + p('M3.500 5h5', G) + p('M9 9l6 5', G, 'none', 2) + p('M1 12v2.500h8V12M3 12v2M5 12v2M7 12v2', G),
            cross: p('M8.500 3v11M3 8.500h11M6.500 6.500h4v4h-4z', G), screen: p('M2.500 2.500h11v11h-11zM8 2v4M8 10v4M2 8h4M10 8h4', G),
            reader: p('M8 0v5M8 11v5', G) + p('M5 3h6l-3 4zM5 13h6l-3-4z', 'none', G), mask: '<ellipse cx="9" cy="11" rx="6" ry="3.500" fill="#9a9eac" stroke="#6d7282"/>' + p('M3 0v5M1 3l2 2.500L5 3', G),
            region: p('M3 0v5M1 3l2 2.500L5 3M2 15L14 5M6 8.500h8v6H6zM5 11h4l2 3', G), dots: p('M3 6h2v2H3zM7 3h2v2H7zM12 6h2v2h-2zM5 10h2v2H5zM11 10h2v2h-2z', 'none', G),
            text: t('T', 2, 14, 17, G, serif), arrow: p('M2 14L12 4', G, 'none', 1.500) + p('M7 2h7v7z', 'none', G), line: p('M2 14L14 3', G, 'none', 1.500), rect: p('M1.500 3.500h12v9h-12z', G, '#b4bacb'),
            hand, formula: p('M1.500 1.500h9l3 3v10h-12z', G, '#eef') + t('√α', 2, 12, 8), minigraph: p('M1.500 .5h9l3 3v11h-12z', G, '#eef') + p('M4.500 4v8h8M5 10l3-3 2 1 2-3', G),
            handaxis: hand + p('M0 15.500h13M14.500 4v12M14 6.500h2M14 10.500h2', G), cube: p('M4.500 4.500l3-3h7v9l-3 4h-7zM4.500 4.500h7v10M11.500 4.500l3-3', G, '#a9aec0'),
            bars: p('M0 2h16M0 6h16M0 10h16', '#9a9eb0', 'none', 2) + p('M0 14h16', G, 'none', 2), legend: p('M.5 .5h15v15H.5zM3 5.500h5M3 11.500h5', G) + t('B', 9, 7, 7, G, sans) + t('C', 9, 14, 7, G, sans), scale: p('M1.500 13V9.500h13V13M6 3l3 3M9 3L6 6', G),
            colorbar: p('M3.500 .5h9v15h-9z', G, '#eef') + p('M5 4.500h3M5 8.500h3M5 12.500h3M9.500 3v3M9.500 7v3M9.500 11v3', G), clock: '<circle cx="8" cy="8" r="6.500" fill="#eef" stroke="#6d7282"/>' + p('M8 4v4.500h3M8 2v1M8 13v1M2 8h1M13 8h1', G),
            // ribbon
            xlSave: p('M1.500 1.500h12v12h-12z', '#8444a8', '#fff', 2) + p('M1 7h13v2H1z', 'none', '#8444a8') + p('M5 14v-3h5v3', '#8444a8'),
            undo: p('M3 5.500h6q5 0 5 4t-4 4', '#bbb', 'none', 2.500) + p('M6 1L1.500 5.500 6 10', '#bbb', 'none', 2.500), redo: p('M13 5.500H7q-5 0-5 4t4 4', '#bbb', 'none', 2.500) + p('M10 1l4.500 4.500L10 10', '#bbb', 'none', 2.500),
            xlCut: p('M4 0l6 9M12 0L6 9', '#666', 'none', 2) + '<circle cx="4" cy="12" r="2.700" fill="none" stroke="#3f78b5" stroke-width="1.500"/><circle cx="12" cy="12" r="2.700" fill="none" stroke="#3f78b5" stroke-width="1.500"/>',
            xlCopy: p('M.5 1.500h6l2 2v8h-8z', '#666', '#fff') + p('M2 5h5M2 7h5M2 9h5', '#3f78b5') + p('M6.500 4.500h6l3 3v7h-9z', '#666', '#fff') + p('M8 8.500h6M8 10.500h6M8 12.500h6', '#3f78b5'),
            xlBrush: p('M8 6l5-5 3 2-5 6z', 'none', '#666') + p('M5 5l6 6-2 2-6-6z', 'none', '#666') + p('M2 8l6 6-2 2-6-5z', 'none', '#edc07a'),
            growA: t('A', 1, 15, 14, '#555', sans + ' font-weight="bold"') + p('M10 4l3-3 3 3z', 'none', '#3f78b5'), shrinkA: t('A', 2, 15, 12, '#555', sans + ' font-weight="bold"') + p('M10 1h6l-3 3z', 'none', '#3f78b5'),
            xlBorder: p('M1.500 1.500h13v12M1.500 1.500v12M8.500 1v12M1 7.500h13', '#777').replace('<path', '<path stroke-dasharray="1 1"') + p('M1 14.500h14', '#555'),
            xlFill: p('M3 6l4-4 5 5-4 4zM6 5V1', '#666', '#fff') + p('M12 4q4 2 2 7l-2-4', 'none', '#3f78b5') + p('M0 14h16', '#ff0', 'none', 4), xlFontA: t('A', 3, 11, 14, '#555', sans + ' font-weight="bold"') + p('M0 14h16', '#f00', 'none', 4),
            vTop: p('M1 1.500h14M3 4.500h10M1 7.500h14', '#666'), vMid: p('M1 4.500h14M3 7.500h10M1 10.500h14', '#666'), vBot: p('M1 8.500h14M3 11.500h10M1 14.500h14', '#555'),
            orient: t('ab', 0, 0, 11, '#555', 'font-weight="bold" transform="translate(4 12) rotate(-45)"') + p('M6 15l9-9M11 5.500h4.500V10', '#666', 'none', 1.500),
            hLeft: p('M1 3.500h14M1 6.500h9M1 9.500h14M1 12.500h9', '#666'), hMid: p('M1 3.500h14M3 6.500h10M1 9.500h14M3 12.500h10', '#666'), hRight: p('M1 3.500h14M6 6.500h9M1 9.500h14M6 12.500h9', '#666'),
            outdent: p('M3 3.500h13M9 6.500h7M9 9.500h7M3 12.500h13', '#666') + p('M1 8h6M4 5L1 8l3 3', '#3f78b5', 'none', 2), indent: p('M3 3.500h13M9 6.500h7M9 9.500h7M3 12.500h13', '#666') + p('M0 8h6M3 5l3 3-3 3', '#3f78b5', 'none', 2),
            wrap: p('M.5 .5h10v4H.5zM.5 7.500h9v8h-9zM2 10.500h6M2 12.500h5', '#666') + p('M3 2.500h11M15 5q1 4-5 4M12 6l-3 3 3 3', '#3f78b5', 'none', 1.500), merge: p('M.5 .5h14v14H.5zM0 3.500h15M0 11.500h15M7.500 0v3M7.500 12v3', '#666') + p('M2 7.500h11M4 5.500l-2 2 2 2M11 5.500l2 2-2 2', '#3f78b5'),
            money: p('M1 1h14v7H1z', '#3f78b5', '#fff', 2) + '<circle cx="7.500" cy="4.500" r="2" fill="#3f78b5"/>' + p('M10 8h6M9 11h6M4 13h6M4 15h6M10 14h5', '#edbf74', 'none', 2), comma: p('M6 4h4v4q0 3-4 5 2-2 1-4H6z', 'none', '#555'),
            decInc: t('.0', 8, 7, 9, '#444', sans) + t('.00', 3, 16, 9, '#444', sans) + p('M1 3.500h6M3 1L1 3.500 3 6', '#3f78b5', 'none', 1.500), decDec: t('.00', 3, 7, 9, '#444', sans) + t('.0', 8, 16, 9, '#444', sans) + p('M0 12.500h6M4 10l2 2.500L4 15', '#3f78b5', 'none', 1.500),
            cond: p('M.5 .5h13v12H.5zM0 4.500h13M0 8.500h13M5.500 0v12', '#888', '#fff') + p('M1 1h6v3H1zM1 9h5v3H1z', 'none', '#d24b2c') + p('M1 5h9v3H1z', 'none', '#3f78b5') + p('M6.500 6.500h9v9h-9z', '#666', '#fff') + p('M8 9.500h6M8 12.500h6M13 8l-4 6', '#444'),
            tblStyle: p('M.5 .5h14v12H.5zM0 4.500h14M0 8.500h14M5.500 0v12M10.500 0v12', '#888', '#fff') + p('M6 5h4v7H6z', 'none', '#c5d8ea') + p('M15 3l-5 7 2 1 4-6z', 'none', '#666') + p('M4 15q4-1 4-4 4-1 4 2t-8 2z', 'none', '#3f78b5'),
            fxX: p('M1 2l13 12M14 2L2 14', '#bdbdbd', 'none', 2.500), fxOk: p('M1 9l4 4L15 2', '#bdbdbd', 'none', 3),
            // windows
            winMin: p('M1 7.500h14v5H1z', '#4a5260', '#fff', 1.500), winMax: p('M1.500 2.500h13v11h-13zM6 6.500h4v3H6z', '#4a5260', '#fff', 1.500), winClose: p('M1 2h5l2 3 2-3h5l-4 6 4 6h-5l-2-3-2 3H1l4-6z', '#4a5260', '#fff', 1.500),
            quick: p('M4.500 3.500h10v10h-11v-4', '#777', '#fff') + p('M5 3h10', '#555', 'none', 2) + p('M7 6h4', '#d24b2c', 'none', 1.500) + p('M6 9h7', '#3f78b5', 'none', 1.500) + p('M6 11.500h5', '#2d9467', 'none', 1.500) + p('M3 2h3L4 5h2l-5 6 1-4H0z', 'none', '#f0c878'),
            plusCircle: '<circle cx="8" cy="8" r="6.800" fill="#fff" stroke="#666"/>' + p('M8 4.500v7M4.500 8h7', '#555', 'none', 2),
            // 2D graph toolbar
            pLine: p('M1 15L15 1'), pScatter: p('M1 11h3v3H1zM6 6h3v3H6zM4 10h2v2H4zM12 1h3v3h-3z', 'none', '#000'), pBoth: p('M2 13L14 2') + p('M1 11h3v3H1zM6 7h3v3H6zM12 1h3v3h-3z', 'none', '#000'),
            pColumn: p('M.5 6.500h4v9h-4zM5.500 1.500h5v14h-5zM10.500 4.500h4v11h-4z', '#000', '#f01010'), pMulti: p('M.5 .5h15v15H.5z', '#000', '#fff') + p('M1 15L15 4M5 7l8 8') + p('M2 5l4-2 4 3 4-4', '#2020d0', 'none', 1.500),
            pBox: p('M8.500 1v14M5 1.500h8M5 14.500h8M4.500 5.500h8v5h-8zM4 8.500h9', '#f01010'), pArea: p('M1 9q7-10 14 0v5q-7-8-14 0z', '#000', '#1010f0'),
            pPolar: '<circle cx="8" cy="8" r="7" fill="#fff" stroke="#000"/>' + p('M8 8L3 4l1-1zM8 8l-5 4 2 1z', '#e0e', '#f020f0') + p('M8 8l5-4-1 8z', '#088', '#10c0c0') + p('M4 4l8 8M12 4l-8 8', '#e01010'),
            pCandle: p('M3.500 1v13M1.500 3.500h4v7h-4z', '#000', '#fff') + p('M11.500 2v13M9.500 5.500h4v8h-4z', '#f01010', '#f01010'), pTemplate: p('M4.500 1.500h11v9l-2 2M2.500 3.500h11v9', '#000', '#fff') + p('M.5 5.500h10l2-2v9l-3 3H.5z', '#000', '#ffe820') + p('M4 12V9l2-1v4l3-4', '#a05000'),
            p3d: p('M1 8l5-6h9v7l-5 6H1z', '#000', '#fff') + p('M2 14q3-5 6-1', '#f01010', 'none', 1.500) + p('M3 9q4-4 6 0l5-3', '#10b010') + p('M8 3q2 3 5 0', '#2020e0'),
            pSurf: p('M1.500 8.500l5-6h9v7l-5 6h-9z', '#000', '#2030e0') + p('M7 3h7l-4 4H4z', 'none', '#f01010') + p('M4 7h6l5-4v2l-5 5H2z', 'none', '#ffe820') + p('M2 10h8l5-5v3l-5 5H2z', 'none', '#10c030'),
            pScat3: p('M1 7l5-6h9v8l-5 6H1zM1 7h9v8M10 7l5-6', '#000', '#fff') + p('M3 9h2v2H3zM7 12h2v2H7zM7 3h2v2H7zM12 7h2v2h-2z', 'none', '#2020e0'),
            pContour: p('M0 1h16v14H0z', 'none', '#20e820') + p('M1 2h3v3H1zM7 2h3v3H7zM12 2h3v3h-3zM1 10h3v3H1zM7 10h3v3H7zM12 10h3v3h-3z', '#fd0', '#f01010') + p('M5 6h2v2H5zM10 6h2v2h-2zM5 12h2v2H5zM10 1h2v2h-2zM7 7h3v2H7z', 'none', '#1040e0'),
            pImage: p('M1.500 1.500h13v13h-13z', G, '#a9aec0') + '<circle cx="6" cy="6" r="2.500" fill="#eef"/><circle cx="11" cy="11" r="3" fill="#dde"/>', pProfile: p('M1 4l3-2 4 3 3-3 4 2', G) + p('M1.500 7.500h13v7h-13z', G, '#a9aec0'),
            catA: p('M3 1l2 2h5l2-2v8q-4 4-9 0z', G, '#eef') + p('M5 6h2M9 6h2M6 9q2 1 3 0', G, 'none', 1.500) + p('M0 14h4M6 14h4M12 14h4', G, 'none', 3), catB: p('M3 1l2 2h5l2-2v8q-4 4-9 0zM2 1l12 10M14 1L2 11', G) + p('M0 14h4M6 14h4M12 14h4', G, 'none', 3),
            catC: p('M2 3q6-3 12 0v6q-3 6-6 6t-6-6z', G, '#8d93a5') + p('M4 6l3 1M9 7l3-1M5 10q3 2 5 0', '#fff'),
            tickA: p('M1 4v10M4 6h4v5H4zM12 1v14M10 3l2-2 2 2M10 13l2 2 2-2', G, 'none', 1.500), tickB: p('M1 4h6M1 9h6M4 4v8M12 1v14M10 3l2-2 2 2', G, 'none', 1.500), tickC: p('M2 4v8M5 4v8M9 7h6M13 2v13', G, 'none', 1.500),
            moveA: p('M3 4h8v8H3zM8 1l4 3-4 3', G, '#8d93a5'), moveB: p('M5 3h8v9H5zM1 8l4-3v6z', G, '#8d93a5'), moveC: p('M3 2l-2 6 4 1-2 5M9 2l-2 6 4 1-2 5', G, 'none', 1.500), moveD: p('M1 9h7M5 6l3 3-3 3', G, 'none', 1.500) + p('M12 2h3l-2 13h-3z', G, '#a9aec0'),
            trap: p('M4 4h7l4 8v3H1v-3zM4 4q4-4 7 0', G, '#a9aec0'), funnel: p('M1 3h14v3l-4 3v6H5V9L1 6z', G, '#a9aec0')
        };

        const svg = name => `<svg class="size-4 shrink-0" viewBox="0 0 16 16" shape-rendering="crispEdges">${icons[name] || ''}</svg>`;
        const fold = '<i class="size-1 self-end bg-[#777] [clip-path:polygon(100%_0,100%_100%,0_100%)]"></i>';

        // Suffixes: * has a flyout corner, + has a drop-down arrow, ! is pressed
        function tool(token) {
            if (token === 'grip') return '<span class="mr-1 ml-1 h-3 w-0.5 border-l-2 border-dotted border-[#a3a5b6]"></span>';
            if (token === '|') return '<span class="mx-[3px] h-[18px] w-0.5 border-l border-[#c4c2bd]"></span>';
            if (token === 'over') return '<button class="flex h-[26px] w-[14px] shrink-0 items-end justify-center rounded-r-md bg-linear-to-b from-[#b4b5cb] to-[#d6d7e6] pb-1" aria-label="More"><svg class="size-2" viewBox="0 0 16 16"><path d="M2 3h12" stroke="#000" stroke-width="2"/><path d="M2 8h12l-6 6z"/></svg></button>';
            const name = token.replace(/[*+!]/g, '');
            if (token.endsWith('+')) return `<button class="flex h-[22px] w-[35px] shrink-0 items-center gap-1 pl-1" aria-label="${name}">${svg(name)}<svg class="size-2" viewBox="0 0 16 16">${icons.downGray}</svg></button>`;
            if (token.endsWith('!')) return `<button class="flex size-[22px] shrink-0 items-center justify-center border border-[#3399ff] bg-[#dcebfb]" aria-label="${name}">${svg(name)}</button>`;
            if (token.endsWith('*')) return `<button class="flex h-[22px] w-[26px] shrink-0 items-center gap-px pl-[3px]" aria-label="${name}">${svg(name)}${fold}</button>`;
            return `<button class="flex size-[22px] shrink-0 items-center justify-center" aria-label="${name}">${svg(name)}</button>`;
        }

        document.querySelectorAll('[data-icon]').forEach(el => {
            el.setAttribute('viewBox', '0 0 16 16');
            el.innerHTML = icons[el.dataset.icon];
        });
        document.querySelectorAll('[data-tools]').forEach(el => {
            el.innerHTML = el.dataset.tools.split(' ').map(tool).join('');
        });
        document.querySelectorAll('[data-palette]').forEach(el => {
            el.innerHTML = '<span class="my-1 ml-0.5 h-0.5 w-4 shrink-0 border-t-2 border-dotted border-[#a3a5b6]"></span>'
                + el.dataset.palette.split(' ').map(tool).join('')
                + '<button class="mt-auto flex h-[14px] w-full shrink-0 items-center justify-end pr-1" aria-label="More"><svg class="size-2" viewBox="0 0 16 16"><path d="M2 1v14" stroke="#000" stroke-width="3"/><path d="M7 1v14l8-7z"/></svg></button>';
        });

        // Worksheet rows
        const rows = [
            [717, '716', '12.49656', '716', '-0.06976'],
            [718, '717', '12.51401', '717', '-0.05234'],
            [719, '718', '12.53146', '718', '-0.0349'],
            [720, '719', '12.54892', '719', '-0.01745'],
            [721, '720', '12.56637', '720', '-4.9E-16'],
            [722, '721', '12.58382', '721', '0.017452'],
            [723, '', '', '', ''], [724, '', '', '', ''], [725, '', '', '', '']
        ];
        const cell = 'border-r border-b border-[#d4d4d4] pr-0.5 text-right';
        document.getElementById('cells').innerHTML = rows.map(([n, a, b, c, d]) => {
            const head = a ? 'border-r-2 border-b border-[#c8c8c8] border-r-[#217346] bg-[#e1e1e1] text-[15px] font-bold text-[#217346]' : 'border-r border-b border-[#d4d4d4] border-r-[#ababab] text-[13px] font-normal text-[#444]';
            const sel = a ? 'bg-[#c6c6c6] border-[#ababab]' : 'border-[#d4d4d4]';
            return `<tr class="h-[18px]"><th class="${head}">${n}</th><td class="${cell}">${a}</td><td class="${cell}">${b}</td>
                <td class="border-r border-b pr-0.5 text-right ${sel}">${c}</td><td class="border-r border-b pr-0.5 text-right ${sel}">${d}</td><td class="${cell}"></td><td class="${cell}"></td></tr>`;
        }).join('');

        // Sine plot
        let axes = 'M301.500 379v221M301 600.500h340';
        [379, 416, 452, 489, 525, 562, 600].forEach((y, i) => axes += `M${i % 2 ? 296 : 299} ${y}.5h5`);
        for (let i = 0; i < 10; i++) axes += `M${Math.round(301 + i * 33.100)}.5 600v${i % 2 ? 5 : 3}`;
        document.getElementById('axes').innerHTML = `<path d="${axes}"/>`;
        let curve = '';
        for (let a = 0; a <= 720; a += 4) curve += `${a ? 'L' : 'M'}${(335 + a * 0.3315).toFixed(1)} ${(489 - 73.500 * Math.sin(a * Math.PI / 180)).toFixed(1)}`;
        document.getElementById('curve').setAttribute('d', curve);
    </script>
</body>
</html>
